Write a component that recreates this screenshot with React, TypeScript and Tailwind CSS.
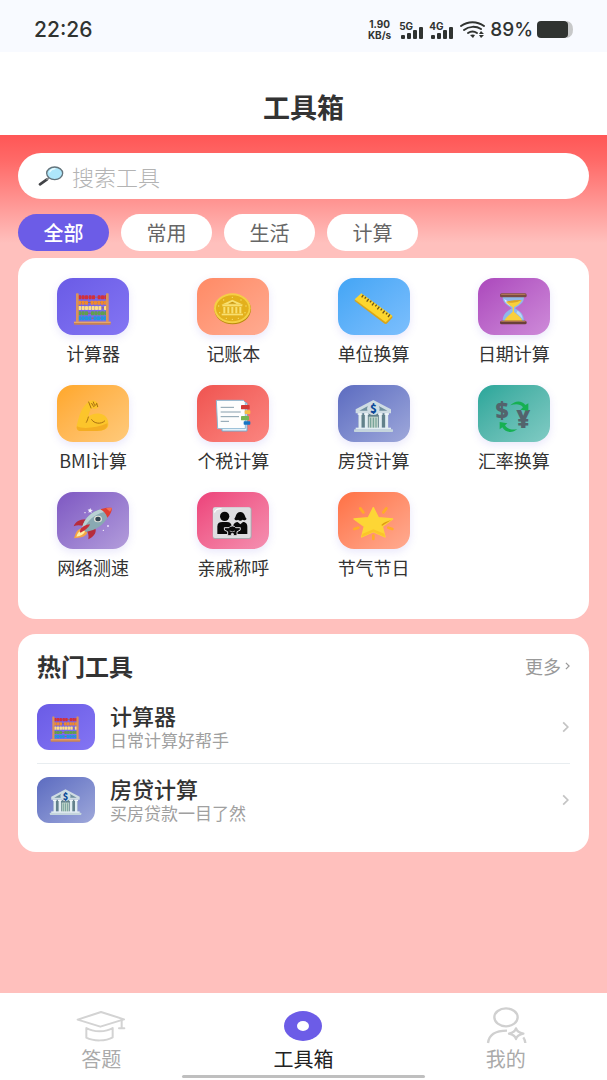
import React from "react";

interface Tool {
  name: string;
  tile: string;
  icon: React.ReactNode;
}

interface HotTool extends Tool {
  desc: string;
}

const FONT =
  "font-['Noto_Sans_CJK_SC','Noto_Sans',sans-serif] antialiased text-[#333333]";

/* Tool drawings, all on the same 216x171 tile canvas */

const Drawing: React.FC<{ children: React.ReactNode }> = ({ children }) => (
  <svg viewBox="0 0 216 171" className="h-full w-full" aria-hidden="true">
    {children}
  </svg>
);

const beadRows = [
  { y: 52, color: "#d32f3c", beads: [64, 74, 84, 95, 105, 122, 132, 142] },
  { y: 68, color: "#f08a2c", beads: [64, 74, 84, 101, 111, 121, 131, 141] },
  { y: 84, color: "#fbe08a", beads: [64, 74, 84, 94, 104, 114, 124, 141] },
  { y: 100, color: "#5fa04e", beads: [64, 74, 84, 102, 112, 122, 132, 142] },
  { y: 115, color: "#2196e0", beads: [64, 74, 84, 94, 110, 120, 131, 141] },
];

const Abacus = () => (
  <Drawing>
    {beadRows.map((row) => (
      <g key={row.y}>
        <rect x="62" y={row.y + 4} width="86" height="3" fill="#9c6a58" />
        {row.beads.map((x) => (
          <rect key={x} x={x} y={row.y} width="9" height="12" rx="2" fill={row.color} />
        ))}
      </g>
    ))}
    <rect x="57" y="46" width="8" height="87" rx="2" fill="#d9935c" />
    <rect x="147" y="46" width="8" height="87" rx="2" fill="#d9935c" />
    <rect x="51" y="131" width="110" height="9" rx="2" fill="#c98252" />
    <rect x="51" y="131" width="110" height="4" fill="#e5a670" />
  </Drawing>
);

const Coin = () => (
  <Drawing>
    <ellipse cx="107" cy="94" rx="55" ry="45" fill="#b98a0c" />
    <ellipse cx="106" cy="91" rx="55" ry="45" fill="#f5cf45" />
    <ellipse cx="106" cy="91" rx="49" ry="39" fill="#e3b01c" />
    <g fill="#f8df70">
      <path d="M106 65 L139 80 H73Z" />
      <rect x="76" y="81" width="60" height="4" />
      <rect x="79" y="87" width="6" height="19" />
      <rect x="91" y="87" width="6" height="19" />
      <rect x="103" y="87" width="6" height="19" />
      <rect x="115" y="87" width="6" height="19" />
      <rect x="127" y="87" width="6" height="19" />
      <rect x="74" y="107" width="64" height="5" />
      <circle cx="106" cy="58" r="2" />
      <circle cx="80" cy="66" r="2" />
      <circle cx="132" cy="66" r="2" />
      <circle cx="65" cy="84" r="2" />
      <circle cx="147" cy="84" r="2" />
      <circle cx="68" cy="104" r="2" />
      <circle cx="144" cy="104" r="2" />
      <circle cx="88" cy="121" r="2" />
      <circle cx="106" cy="124" r="2" />
      <circle cx="124" cy="121" r="2" />
    </g>
    <path d="M106 71 L119 77 H93Z" fill="#c8940f" />
  </Drawing>
);

const Ruler = () => (
  <Drawing>
    <path d="M50 65 V69 L141 138 L146 137 L163 119 V114Z" fill="#d9a51b" />
    <path d="M50 64 L70 46 L163 113 L143 133Z" fill="#fcd62f" />
    <path
      d="M76 51l-5 7M84 57l-4 5M92 63l-6 8M100 68l-4 5M108 74l-6 8M116 80l-4 5M124 86l-6 8M132 92l-4 5M140 98l-6 8M148 104l-4 5M156 109l-6 8"
      stroke="#6b531a"
      strokeWidth="4"
    />
  </Drawing>
);

const Hourglass = () => (
  <Drawing>
    <path
      d="M74 57 H138 C138 77 122 82 111 91 C122 99 138 104 138 130 H74 C74 104 92 99 101 91 C90 82 74 77 74 57Z"
      fill="#8fb8ea"
    />
    <path d="M79 63 C80 74 91 80 97 84 L92 72Z" fill="#dcecff" />
    <path d="M84 71 Q101 77 131 66 C126 79 114 83 108 88 V102 C119 111 130 118 133 129 H79 C84 117 95 111 104 101 V88 C98 82 88 79 84 71Z" fill="#f9cf3b" />
    <path d="M84 71 Q108 65 131 66 Q108 80 84 71Z" fill="#dea522" />
    <path d="M119 98 C130 106 133 113 134 124 C128 116 122 111 115 105Z" fill="#b7d6fa" />
    <rect x="66" y="46" width="80" height="12" rx="5" fill="#7a4b42" />
    <rect x="69" y="47" width="74" height="4" rx="2" fill="#ad7455" />
    <rect x="66" y="128" width="80" height="11" rx="5" fill="#6a403a" />
    <rect x="69" y="128" width="74" height="4" rx="2" fill="#a96f50" />
  </Drawing>
);

const Muscle = () => (
  <Drawing>
    <path
      d="M96 48 C103 44 112 45 118 50 C124 54 126 61 123 67 C118 74 108 72 103 69 C99 77 95 86 94 96 C100 89 114 84 129 86 C145 88 156 102 154 120 C152 133 140 138 119 137 H67 C58 135 57 126 61 115 C66 93 74 68 90 55Z"
      fill="#fcc52b"
    />
    <path d="M60 124 C78 134 121 128 151 115 C154 130 141 138 119 138 H67 C60 136 58 130 60 124Z" fill="#f4ad22" />
    <path
      d="M94 96 C92 103 91 107 88 112 M104 104 C111 116 132 119 143 108 M95 51 L102 69 M104 55 L110 65 L119 57 M109 51 L112 59 M119 55 L122 65"
      fill="none"
      stroke="#a97012"
      strokeWidth="3"
      strokeLinecap="round"
    />
  </Drawing>
);

const Bookmarks = () => (
  <Drawing>
    <path d="M72 54 H150 V138 H75Z" fill="#f5fbff" stroke="#73a9cd" strokeWidth="3" />
    <path d="M58 46 H139 L145 52 V131 H62Z" fill="#fdfdfd" stroke="#8bb7d2" strokeWidth="3" />
    <path d="M71 67h40M71 81h60M71 95h55M71 109h25" stroke="#879eac" strokeWidth="3" />
    <rect x="132" y="60" width="26" height="13" rx="2" fill="#d23a36" />
    <rect x="143" y="76" width="17" height="11" rx="2" fill="#f7bc45" />
    <rect x="132" y="93" width="24" height="13" rx="2" fill="#75b653" />
    <rect x="140" y="109" width="20" height="10" rx="2" fill="#1976c4" />
  </Drawing>
);

const Bank = () => (
  <Drawing>
    <path d="M106 45 L159 73 V85 H53 V73Z" fill="#cfdce3" />
    <path d="M106 54 L148 77 H64Z" fill="#70909e" />
    <rect x="62" y="85" width="88" height="43" fill="#62818b" />
    <rect x="92" y="95" width="28" height="35" fill="#bfd2ca" />
    <path d="M98 98v32M106 98v32M114 98v32" stroke="#6a9c91" strokeWidth="3" />
    <path d="M66 85v45M85 85v45M127 85v45M146 85v45" stroke="#e2edf2" strokeWidth="9" />
    <path d="M59 87h14M78 87h14M120 87h14M139 87h14" stroke="#f2f7f9" strokeWidth="5" />
    <rect x="53" y="128" width="106" height="6" fill="#e2edf2" />
    <rect x="48" y="133" width="117" height="8" rx="2" fill="#c5d5dd" />
    <circle cx="106" cy="71" r="19" fill="#cfdce3" />
    <text x="106" y="84" textAnchor="middle" fontSize="34" fontWeight="900" fill="#0d4a99">
      $
    </text>
  </Drawing>
);

const Exchange = () => (
  <Drawing>
    <g fontFamily="Noto Sans, sans-serif" fontWeight="900" fill="#53636c" textAnchor="middle">
      <text x="72" y="101" fontSize="68">$</text>
      <text x="136" y="128" fontSize="72">¥</text>
    </g>
    <path d="M97 61 C112 44 133 47 142 60 L151 55 L151 77 L127 74 L135 67 C126 55 111 57 97 61Z" fill="#16b052" />
    <path d="M118 132 C103 146 82 143 73 127 L65 133 V111 L88 115 L81 121 C89 134 103 136 118 132Z" fill="#16b052" />
  </Drawing>
);

const Rocket = () => (
  <Drawing>
    <path d="M78 107 C57 113 57 123 51 139 C70 136 83 137 91 122Z" fill="#f5a445" />
    <path d="M77 111 C67 117 61 124 58 134 C71 132 80 127 84 119Z" fill="#fff0a2" />
    <path d="M86 82 C65 83 55 90 50 103 C60 98 70 99 80 103Z" fill="#b62c3d" />
    <path d="M113 104 C122 119 111 134 94 142 C96 129 93 122 88 115Z" fill="#b62c3d" />
    <path d="M75 107 C81 79 106 56 135 51 L153 73 C142 99 116 115 87 120Z" fill="#89a9b2" />
    <path d="M75 107 C82 78 105 57 135 51 L142 60 C112 67 91 86 80 112Z" fill="#b9d0d4" />
    <path d="M130 52 C142 47 154 46 165 48 C164 59 160 68 151 77 C147 65 140 57 130 52Z" fill="#df3e32" />
    <path d="M147 49 C153 47 160 47 165 48 C163 53 161 56 159 59Z" fill="#f36f54" />
    <ellipse cx="123" cy="81" rx="12" ry="10" fill="#e5e5dc" />
    <ellipse cx="123" cy="81" rx="8" ry="7" fill="#314451" />
    <path d="M68 119 C72 104 86 98 99 97 C94 109 82 116 71 122Z" fill="#c62d39" />
    <path d="M100 48l2 5 6 1-5 3 1 6-5-3-5 2 2-5-4-4 6-1z" fill="#f5f2ff" />
    <circle cx="84" cy="62" r="2" fill="#fff" />
    <circle cx="153" cy="102" r="3" fill="#e9ddff" />
    <circle cx="139" cy="115" r="2" fill="#fff" />
  </Drawing>
);

const Family = () => (
  <Drawing>
    <rect x="47" y="46" width="117" height="95" rx="7" fill="#aaaab0" />
    <rect x="48" y="46" width="113" height="92" rx="6" fill="#dedee1" />
    <path d="M53 60 Q56 50 72 50" stroke="#fff" strokeWidth="4" fill="none" strokeLinecap="round" />
    <circle cx="83" cy="73" r="14" fill="#090909" />
    <path d="M61 126 V104 C61 94 66 90 76 90 H90 C99 90 104 96 104 104 V126Z" fill="#090909" />
    <path d="M112 80 C117 77 115 61 130 60 C145 60 143 78 149 80 C146 86 138 85 137 83 C132 87 127 87 123 83 C120 86 114 85 112 80Z" fill="#090909" />
    <path d="M108 126 V103 C110 93 116 90 122 90 L130 97 L138 90 C148 90 151 97 151 105 V126Z" fill="#090909" />
    <path
      d="M82 107 H96 A11 9 0 0 1 116 107 H130 Q134 116 120 119 V131 H109 V125 H103 V131 H92 V119 Q78 116 82 107Z"
      fill="#090909"
      stroke="#dedee1"
      strokeWidth="3"
    />
    <path d="M98 117 Q106 122 114 117" fill="none" stroke="#dedee1" strokeWidth="2" />
  </Drawing>
);

const Star = () => (
  <Drawing>
    <path
      d="M67 49l9 12M145 49l-9 12M49 111l12-4M163 111l-12-4M106 131v10"
      stroke="#ffad26"
      strokeWidth="8"
      strokeLinecap="round"
    />
    <path
      d="M106 47 L121 77 L164 81 L133 103 L141 135 L106 119 L71 135 L79 103 L48 81 L91 77Z"
      fill="#fdd635"
      stroke="#fdd635"
      strokeWidth="4"
      strokeLinejoin="round"
    />
    <path d="M161 83 L133 101 C127 100 130 93 161 83Z" fill="#df9d13" />
    <path d="M71 135 L106 119 L141 135 L139 125 L106 112 L74 125Z" fill="#fbc52a" />
  </Drawing>
);

const tools: Tool[] = [
  { name: "计算器", tile: "from-[#6a5be6] to-[#8475f3]", icon: <Abacus /> },
  { name: "记账本", tile: "from-[#ff8a65] to-[#ffab91]", icon: <Coin /> },
  { name: "单位换算", tile: "from-[#42a5f5] to-[#7cbffd]", icon: <Ruler /> },
  { name: "日期计算", tile: "from-[#ab47bc] to-[#ce8bd9]", icon: <Hourglass /> },
  { name: "BMI计算", tile: "from-[#ffa726] to-[#ffca7a]", icon: <Muscle /> },
  { name: "个税计算", tile: "from-[#ef5350] to-[#fb8580]", icon: <Bookmarks /> },
  { name: "房贷计算", tile: "from-[#5c6bc0] to-[#9fa8da]", icon: <Bank /> },
  { name: "汇率换算", tile: "from-[#26a69a] to-[#80cbc4]", icon: <Exchange /> },
  { name: "网络测速", tile: "from-[#7e57c2] to-[#b39ddb]", icon: <Rocket /> },
  { name: "亲戚称呼", tile: "from-[#ec407a] to-[#f48fb1]", icon: <Family /> },
  { name: "节气节日", tile: "from-[#ff7043] to-[#ffab91]", icon: <Star /> },
];

const hotTools: HotTool[] = [
  { ...tools[0], desc: "日常计算好帮手" },
  { ...tools[6], desc: "买房贷款一目了然" },
];

const categories = ["全部", "常用", "生活", "计算"];

/* Status bar */

const Signal: React.FC<{ label: string }> = ({ label }) => (
  <div className="flex flex-col">
    <span className="text-[10px] leading-[10px] font-bold">{label}</span>
    <svg width="26" height="12" viewBox="0 0 26 12" className="-mt-1" fill="currentColor" aria-hidden="true">
      <rect x="2" y="8" width="4" height="4" rx="1" />
      <rect x="8" y="6" width="4" height="6" rx="1" />
      <rect x="14" y="3" width="4" height="9" rx="1" />
      <rect x="20" y="0" width="4" height="12" rx="1" />
    </svg>
  </div>
);

const StatusBar = () => (
  <div className="flex h-13 items-center justify-between bg-[#f8faff] pt-[7px] pr-[34px] pl-[34px] font-['Inter',sans-serif] text-[#303331]">
    <span className="text-[21px] leading-6 font-medium">22:26</span>
    <div className="flex items-center">
      <div className="mr-2 text-center text-[10px] leading-[11px] font-bold">
        <div>1.90</div>
        <div>KB/s</div>
      </div>
      <div className="mr-[5px] flex gap-1">
        <Signal label="5G" />
        <Signal label="4G" />
      </div>
      <svg width="26" height="18" viewBox="0 0 26 18" className="mr-1" aria-hidden="true">
        <g fill="none" stroke="currentColor" strokeWidth="2" strokeLinecap="round">
          <path d="M1 5 C8 0 17 0 24 5" />
          <path d="M4 9 C9 5 16 5 21 8" />
          <path d="M8 12 C11 10 14 10 17 12" />
        </g>
        <path d="M10 14 Q13 13 15 14 L13 17Z M19 13l2-3 3 3z M19 14h5l-3 3z" fill="currentColor" />
      </svg>
      <span className="mr-1 text-[19px] leading-6 font-medium">89%</span>
      <svg width="36" height="17" viewBox="0 0 36 17" aria-hidden="true">
        <path d="M30 0 Q36 1 36 8.5 Q36 16 30 17Z" fill="#c7c8c9" />
        <rect width="31" height="17" rx="4" fill="currentColor" />
      </svg>
    </div>
  </div>
);

const SearchIcon = () => (
  <svg width="26" height="20" viewBox="0 0 78 60" aria-hidden="true">
    <path d="M6 55 L27 40" stroke="#414347" strokeWidth="8" strokeLinecap="round" />
    <path d="M25 41 L36 33" stroke="#8d8e90" strokeWidth="5" />
    <ellipse cx="50" cy="22" rx="24" ry="19" fill="#aee7fb" stroke="#64747c" strokeWidth="4" />
    <path d="M35 18 Q39 9 51 8" fill="none" stroke="#e7fbff" strokeWidth="4" strokeLinecap="round" />
  </svg>
);

const Chevron: React.FC<{ className: string }> = ({ className }) => (
  <svg
    viewBox="0 0 6 10"
    className={className}
    fill="none"
    stroke="currentColor"
    strokeWidth="1.5"
    aria-hidden="true"
  >
    <path d="M1 1 L5 5 L1 9" />
  </svg>
);

/* Bottom navigation */

const CapIcon = () => (
  <svg width="50" height="32" viewBox="0 0 150 96" fill="none" stroke="#d3d3d3" strokeWidth="6" strokeLinejoin="round" aria-hidden="true">
    <path d="M5 29 L75 6 L144 28 L73 50Z" />
    <path d="M31 54 V83 C52 94 90 94 110 82 V54 C90 67 52 67 31 54Z" />
    <path d="M137 30 V54 M129 55 H145" strokeLinecap="round" />
  </svg>
);

const ToolboxIcon = () => (
  <svg width="38" height="32" viewBox="0 0 38 32" aria-hidden="true">
    <ellipse cx="19" cy="16" rx="19" ry="15" fill="#6c5ce7" />
    <ellipse cx="19" cy="16" rx="6" ry="5" fill="#fff" />
  </svg>
);

const ProfileIcon = () => (
  <svg width="42" height="40" viewBox="0 0 126 120" fill="none" stroke="#d0d0d0" strokeWidth="7" aria-hidden="true">
    <ellipse cx="63" cy="34" rx="35" ry="27" />
    <path d="M9 111 C12 86 32 74 66 74 M115 94 Q120 101 121 111" />
    <path d="M93 67 Q96 79 115 83 Q96 87 93 99 Q90 87 72 83 Q90 79 93 67Z" strokeLinejoin="round" />
  </svg>
);

const navItems = [
  { label: "答题", icon: <CapIcon />, active: false },
  { label: "工具箱", icon: <ToolboxIcon />, active: true },
  { label: "我的", icon: <ProfileIcon />, active: false },
];

const BottomNav = () => (
  <nav className="flex flex-col items-center bg-white pt-[13px] pb-[2px]">
    <div className="grid w-full grid-cols-3">
      {navItems.map((item) => (
        <a
          key={item.label}
          href="#"
          aria-current={item.active ? "page" : undefined}
          className={`flex flex-col items-center gap-px text-xl ${
            item.active ? "text-[#222222]" : "text-[#aaaaaa]"
          }`}
        >
          <span className="flex h-10 items-center">{item.icon}</span>
          <span className="leading-6">{item.label}</span>
        </a>
      ))}
    </div>
    <div className="mt-1 h-[3px] w-2/5 rounded-full bg-[#bfbfbf]" />
  </nav>
);

export default function App() {
  return (
    <div className={`flex min-h-screen flex-col bg-white ${FONT}`}>
      <StatusBar />
      <header className="flex h-[83px] items-end justify-center pb-[10px]">
        <h1 className="text-[27px] leading-9 font-bold">工具箱</h1>
      </header>

      <main className="flex-1 bg-[#ffc0bd] bg-[linear-gradient(180deg,#ff5656_0px,#ff6a68_26px,#ffc0bd_108px)] px-[18px] pt-[18px] pb-6">
        {/* Search */}
        <label className="flex h-[46px] items-center gap-2 rounded-full bg-white px-5">
          <SearchIcon />
          <input
            type="search"
            aria-label="搜索工具"
            placeholder="搜索工具"
            className="min-w-0 flex-1 bg-transparent text-[22px] leading-8 font-light outline-none placeholder:text-[#b3b3b3]"
          />
        </label>

        {/* Categories */}
        <div className="mt-[15px] flex gap-3">
          {categories.map((category, index) => (
            <button
              key={category}
              type="button"
              className={`h-[37px] w-[91px] rounded-full text-xl ${
                index === 0
                  ? "bg-[#6c5ce7] font-medium text-white"
                  : "bg-white text-[#666666]"
              }`}
            >
              {category}
            </button>
          ))}
        </div>

        {/* Tool grid */}
        <section className="mt-[7px] grid grid-cols-4 gap-y-5 rounded-[18px] bg-white px-[5px] pt-5 pb-10">
          {tools.map((tool) => (
            <button key={tool.name} type="button" className="flex flex-col items-center gap-[6px]">
              <span
                className={`h-[57px] w-[72px] rounded-2xl bg-linear-to-br shadow-[0_3px_9px_rgba(108,92,231,0.15)] ${tool.tile}`}
              >
                {tool.icon}
              </span>
              <span className="text-lg leading-6">{tool.name}</span>
            </button>
          ))}
        </section>

        {/* Hot tools */}
        <section className="mt-[15px] rounded-[18px] bg-white px-[19px] pt-5 pb-4">
          <div className="mb-[13px] flex h-6 items-center justify-between">
            <h2 className="text-2xl leading-6 font-bold">热门工具</h2>
            <a href="#" className="flex items-center gap-1 text-lg leading-6 text-[#999999]">
              更多
              <Chevron className="h-2 w-[5px]" />
            </a>
          </div>
          <ul className="divide-y divide-[#e8edf0]">
            {hotTools.map((tool) => (
              <li key={tool.name}>
                <a href="#" className="flex items-center py-[11px]">
                  <span className={`h-[46px] w-[58px] rounded-xl bg-linear-to-br ${tool.tile}`}>
                    {tool.icon}
                  </span>
                  <span className="ml-[15px] flex flex-1 flex-col">
                    <span className="text-[22px] leading-[26px] font-medium">{tool.name}</span>
                    <span className="text-[17px] leading-6 text-[#a0a0a0]">{tool.desc}</span>
                  </span>
                  <Chevron className="mr-px h-3 w-[7px] text-[#c4c4c4]" />
                </a>
              </li>
            ))}
          </ul>
        </section>
      </main>

      <BottomNav />
    </div>
  );
}
